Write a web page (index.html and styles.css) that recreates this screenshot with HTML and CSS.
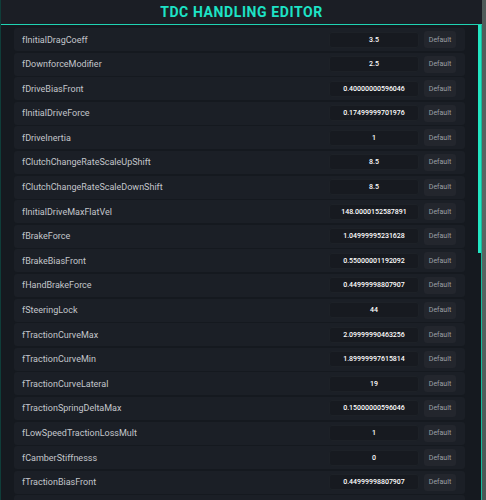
FILE: index.html
```html
<!DOCTYPE html>
<html>
<head>
<meta charset="utf-8">
<link rel="stylesheet" href="styles.css">
</head>
<body>
<div class="panel">
  <header class="header"><h1 class="title">TDC HANDLING EDITOR</h1></header>
  <div class="body">
    <div class="list">
      <div class="row"><span class="label">fInitialDragCoeff</span><div class="controls"><div class="value">3.5</div><button class="btn">Default</button></div></div>
      <div class="row"><span class="label">fDownforceModifier</span><div class="controls"><div class="value">2.5</div><button class="btn">Default</button></div></div>
      <div class="row"><span class="label">fDriveBiasFront</span><div class="controls"><div class="value">0.40000000596046</div><button class="btn">Default</button></div></div>
      <div class="row"><span class="label">fInitialDriveForce</span><div class="controls"><div class="value">0.17499999701976</div><button class="btn">Default</button></div></div>
      <div class="row"><span class="label">fDriveInertia</span><div class="controls"><div class="value">1</div><button class="btn">Default</button></div></div>
      <div class="row"><span class="label">fClutchChangeRateScaleUpShift</span><div class="controls"><div class="value">8.5</div><button class="btn">Default</button></div></div>
      <div class="row"><span class="label">fClutchChangeRateScaleDownShift</span><div class="controls"><div class="value">8.5</div><button class="btn">Default</button></div></div>
      <div class="row"><span class="label">fInitialDriveMaxFlatVel</span><div class="controls"><div class="value">148.0000152587891</div><button class="btn">Default</button></div></div>
      <div class="row"><span class="label">fBrakeForce</span><div class="controls"><div class="value">1.04999995231628</div><button class="btn">Default</button></div></div>
      <div class="row"><span class="label">fBrakeBiasFront</span><div class="controls"><div class="value">0.55000001192092</div><button class="btn">Default</button></div></div>
      <div class="row"><span class="label">fHandBrakeForce</span><div class="controls"><div class="value">0.44999998807907</div><button class="btn">Default</button></div></div>
      <div class="row"><span class="label">fSteeringLock</span><div class="controls"><div class="value">44</div><button class="btn">Default</button></div></div>
      <div class="row"><span class="label">fTractionCurveMax</span><div class="controls"><div class="value">2.09999990463256</div><button class="btn">Default</button></div></div>
      <div class="row"><span class="label">fTractionCurveMin</span><div class="controls"><div class="value">1.89999997615814</div><button class="btn">Default</button></div></div>
      <div class="row"><span class="label">fTractionCurveLateral</span><div class="controls"><div class="value">19</div><button class="btn">Default</button></div></div>
      <div class="row"><span class="label">fTractionSpringDeltaMax</span><div class="controls"><div class="value">0.15000000596046</div><button class="btn">Default</button></div></div>
      <div class="row"><span class="label">fLowSpeedTractionLossMult</span><div class="controls"><div class="value">1</div><button class="btn">Default</button></div></div>
      <div class="row"><span class="label">fCamberStiffnesss</span><div class="controls"><div class="value">0</div><button class="btn">Default</button></div></div>
      <div class="row"><span class="label">fTractionBiasFront</span><div class="controls"><div class="value">0.44999998807907</div><button class="btn">Default</button></div></div>
      <div class="row row-empty"></div>
    </div>
    <div class="scrollbar"><div class="thumb"></div></div>
  </div>
</div>
</body>
</html>
```
FILE: styles.css
```css
html, body {
  margin: 0;
  padding: 0;
}
body {
  width: 486px;
  height: 500px;
  overflow: hidden;
  background: linear-gradient(180deg, #4f5a58 0%, #5b6764 40%, #4a5654 100%);
  font-family: Roboto, "Noto Sans", sans-serif;
}
.panel {
  width: 481px;
  height: 500px;
  background: #15191f;
  border-left: 1px solid #0f3d39;
  display: flex;
  flex-direction: column;
}
.header {
  height: 24px;
  flex: none;
  background: #1b1e25;
  border-bottom: 1px solid #1fd3b3;
  display: flex;
  align-items: center;
  justify-content: center;
}
.title {
  margin: 0;
  font-size: 14px;
  font-weight: 700;
  letter-spacing: 0.6px;
  color: #1de3c6;
  line-height: 1;
}
.body {
  flex: 1;
  display: flex;
  min-height: 0;
}
.list {
  flex: 1;
  overflow: hidden;
  padding: 3px 13px 0 13px;
  display: flex;
  flex-direction: column;
  gap: 1.6px;
}
.row {
  flex: none;
  height: 23px;
  background: #1b1f26;
  border-radius: 3px;
  display: flex;
  align-items: center;
  justify-content: space-between;
  padding: 0 9px 0 8px;
}
.label {
  font-size: 9px;
  color: #c3c6cb;
}
.controls {
  display: flex;
  align-items: center;
  gap: 5px;
}
.value {
  width: 90px;
  height: 16px;
  box-sizing: border-box;
  background: #171a20;
  border: 1px solid #1d2127;
  border-radius: 3px;
  color: #ffffff;
  font-size: 7px;
  font-weight: 500;
  display: flex;
  align-items: center;
  justify-content: center;
}
.btn {
  width: 32px;
  height: 17px;
  padding: 0;
  border: none;
  border-radius: 3px;
  background: #23262d;
  color: #9ca0a6;
  font-family: Roboto, "Noto Sans", sans-serif;
  font-size: 7px;
}
.scrollbar {
  flex: none;
  width: 3px;
  border-right: 1px solid #18b99c;
}
.thumb {
  width: 3px;
  height: 228px;
  background: #22e5c2;
}
```
